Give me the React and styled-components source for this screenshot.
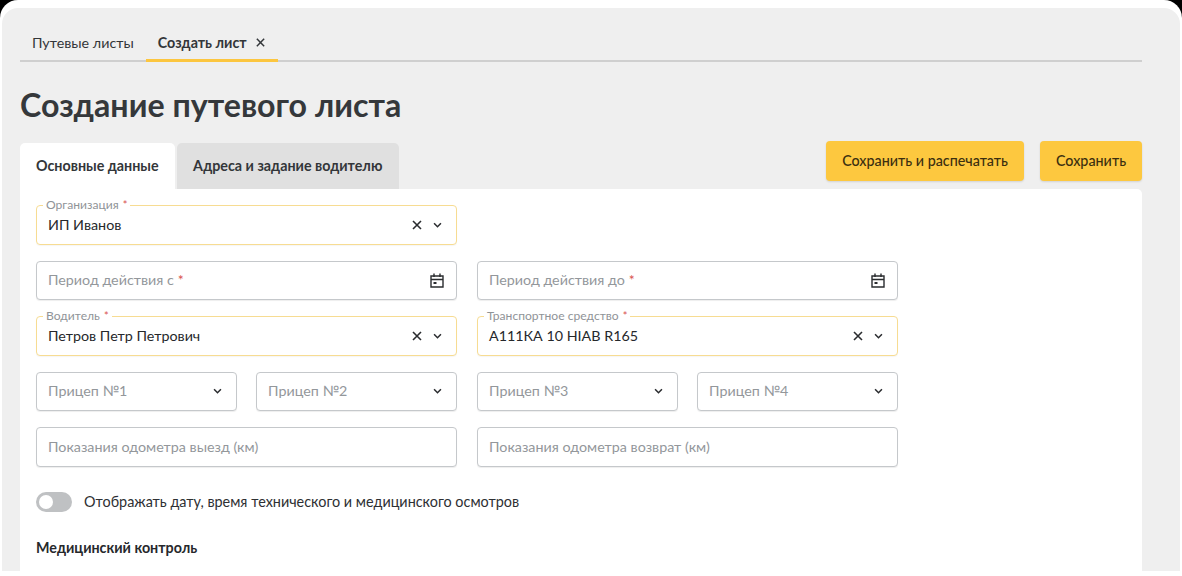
import React from "react";
import styled, { createGlobalStyle } from "styled-components";

const Global = createGlobalStyle`
  html, body { margin: 0; padding: 0; background: #000; }
  body { width: 1182px; height: 576px; overflow: hidden; font-family: Lato, "Noto Sans", sans-serif; }
  * { box-sizing: border-box; }
`;

const Frame = styled.div`
  width: 1182px;
  height: 576px;
  background: #fff;
  border-radius: 18px 18px 0 0;
  padding: 8px 0 0 2px;
  overflow: hidden;
`;

const Panel = styled.main`
  width: 1178px;
  height: 563px;
  background: #efefef;
  border-radius: 16px 16px 0 0;
  padding: 20px 38px 0 18px;
`;

const TopTabs = styled.nav`
  display: flex;
  height: 34px;
  border-bottom: 2px solid #cfcfcf;
`;

const TopTab = styled.div`
  display: flex;
  align-items: center;
  gap: 8px;
  height: 34px;
  padding: 0 12px 2px;
  margin-bottom: -2px;
  font-size: 14.3px;
  color: #333639;
  font-weight: ${(p) => (p.$active ? 700 : 400)};
  border-bottom: 3px solid ${(p) => (p.$active ? "#fcc63f" : "transparent")};
`;

const Title = styled.h1`
  margin: 23px 0 0;
  font-size: 32.2px;
  line-height: 40px;
  font-weight: 700;
  color: #35383b;
`;

const ActionRow = styled.div`
  display: flex;
  align-items: flex-end;
  justify-content: space-between;
  height: 46px;
  margin-top: 18px;
`;

const FormTabs = styled.div`
  display: flex;
  gap: 2px;
`;

const FormTab = styled.div`
  display: flex;
  align-items: center;
  height: 46px;
  padding: 0 16.5px 2px 16px;
  font-size: 14.3px;
  font-weight: 700;
  color: #333639;
  border-radius: 5px 5px 0 0;
  background: ${(p) => (p.$active ? "#fff" : "#e0e0e0")};
`;

const Buttons = styled.div`
  display: flex;
  gap: 16px;
  margin-bottom: 8px;
`;

const SaveButton = styled.button`
  height: 40px;
  padding: 0 16px 1px;
  border: 0;
  border-radius: 4px;
  background: #fdc83f;
  color: #3b2f10;
  font: 500 14.3px Lato, "Noto Sans", sans-serif;
  box-shadow: 0 1px 2px rgba(0, 0, 0, 0.12);
`;

const Card = styled.section`
  background: #fff;
  border-radius: 0 5px 5px 5px;
  height: 388px;
  padding: 16px 16px 0;
`;

const FormGrid = styled.div`
  display: grid;
  grid-template-columns: 421px 421px;
  column-gap: 20px;
  row-gap: 16px;
  width: 862px;
`;

const Field = styled.div`
  position: relative;
  display: flex;
  align-items: center;
  height: 39.5px;
  padding: 0 11px;
  background: #fff;
  border-radius: 4px;
  border: 1px solid ${(p) => (p.$filled ? "#f7dc92" : "#c5c8cb")};
  box-shadow: 0 1px 1px rgba(0, 0, 0, ${(p) => (p.$filled ? 0.04 : 0.07)});
`;

const Floating = styled.label`
  position: absolute;
  left: 6px;
  top: -8px;
  padding: 0 3px;
  background: #fff;
  font-size: 12.1px;
  line-height: 14px;
  color: #8f9397;
`;

const Star = styled.span`
  color: #d9534f;
  font-size: ${(p) => (p.$small ? "11px" : "14px")};
  margin-left: 4px;
`;

const Value = styled.span`
  flex: 1;
  padding-bottom: 1px;
  font-size: 14.3px;
  color: #26282b;
  white-space: nowrap;
`;

const Placeholder = styled(Value)`
  color: #93979b;
`;

const Icons = styled.span`
  display: flex;
  align-items: center;
  gap: 10px;
  margin-right: ${(p) => (p.$date ? "1px" : "3px")};
  color: #2a2c2f;
`;

const PairRow = styled.div`
  display: grid;
  grid-template-columns: 201px 201px;
  column-gap: 19px;
`;

const ToggleRow = styled.div`
  display: flex;
  align-items: center;
  gap: 12px;
  margin-top: 25px;
  font-size: 14.4px;
  color: #2e3033;
`;

const Toggle = styled.span`
  display: flex;
  align-items: center;
  width: 36px;
  height: 20px;
  padding: 3px;
  border-radius: 10px;
  background: #bfc1c3;
`;

const Knob = styled.span`
  width: 14px;
  height: 14px;
  border-radius: 50%;
  background: #fff;
`;

const SectionTitle = styled.h2`
  margin: 27px 0 0;
  font-size: 14.3px;
  line-height: 18px;
  font-weight: 700;
  color: #26282b;
`;

const Cross = ({ size = 12 }) => (
  <svg width={size} height={size} viewBox="0 0 12 12" fill="none" stroke="currentColor" strokeWidth="1.6">
    <path d="M2 2l8 8M10 2l-8 8" />
  </svg>
);

const Chevron = () => (
  <svg width="9" height="6" viewBox="0 0 10 7" fill="none" stroke="currentColor" strokeWidth="1.8">
    <path d="M1 1.5l4 4 4-4" />
  </svg>
);

const Calendar = () => (
  <svg width="14" height="15" viewBox="0 0 14 15" fill="none" stroke="currentColor" strokeWidth="1.4">
    <path d="M1 3h12v11H1zM1 6.5h12M4 .5v3.5M10 .5v3.5" />
    <path d="M3.5 9h3v2h-3z" fill="currentColor" stroke="none" />
  </svg>
);

const SelectField = ({ label, value }) => (
  <Field $filled>
    <Floating>
      {label}
      <Star $small>*</Star>
    </Floating>
    <Value>{value}</Value>
    <Icons>
      <Cross />
      <Chevron />
    </Icons>
  </Field>
);

const DateField = ({ label }) => (
  <Field>
    <Placeholder>
      {label}
      <Star>*</Star>
    </Placeholder>
    <Icons $date>
      <Calendar />
    </Icons>
  </Field>
);

const Trailer = ({ label }) => (
  <Field>
    <Placeholder>{label}</Placeholder>
    <Icons>
      <Chevron />
    </Icons>
  </Field>
);

export default function App() {
  return (
    <>
      <Global />
      <Frame>
        <Panel>
          <TopTabs>
            <TopTab>Путевые листы</TopTab>
            <TopTab $active>
              Создать лист <Cross size={11} />
            </TopTab>
          </TopTabs>
          <Title>Создание путевого листа</Title>
          <ActionRow>
            <FormTabs>
              <FormTab $active>Основные данные</FormTab>
              <FormTab>Адреса и задание водителю</FormTab>
            </FormTabs>
            <Buttons>
              <SaveButton>Сохранить и распечатать</SaveButton>
              <SaveButton>Сохранить</SaveButton>
            </Buttons>
          </ActionRow>
          <Card>
            <FormGrid>
              <SelectField label="Организация" value="ИП Иванов" />
              <div />
              <DateField label="Период действия с" />
              <DateField label="Период действия до" />
              <SelectField label="Водитель" value="Петров Петр Петрович" />
              <SelectField label="Транспортное средство" value="А111КА 10 HIAB R165" />
              <PairRow>
                <Trailer label="Прицеп №1" />
                <Trailer label="Прицеп №2" />
              </PairRow>
              <PairRow>
                <Trailer label="Прицеп №3" />
                <Trailer label="Прицеп №4" />
              </PairRow>
              <Field>
                <Placeholder>Показания одометра выезд (км)</Placeholder>
              </Field>
              <Field>
                <Placeholder>Показания одометра возврат (км)</Placeholder>
              </Field>
            </FormGrid>
            <ToggleRow>
              <Toggle>
                <Knob />
              </Toggle>
              Отображать дату, время технического и медицинского осмотров
            </ToggleRow>
            <SectionTitle>Медицинский контроль</SectionTitle>
          </Card>
        </Panel>
      </Frame>
    </>
  );
}
